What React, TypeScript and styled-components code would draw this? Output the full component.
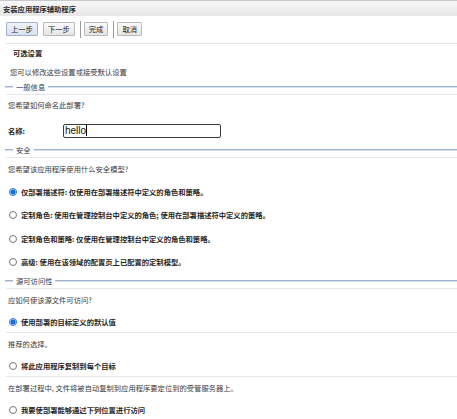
import React from 'react'
import styled, { createGlobalStyle } from 'styled-components'

const GlobalStyle = createGlobalStyle`
  html, body {
    margin: 0;
    padding: 0;
    background: #ffffff;
  }
  body {
    font-family: "Noto Sans CJK SC", "Noto Sans", "Liberation Sans", sans-serif;
    font-size: 7.3px;
    color: #333333;
  }
  * { box-sizing: border-box; }
`

interface RowProps {
  h: number
  pl?: number
  line?: boolean
}

interface RadioProps {
  checked?: boolean
}

const securityOptions = [
  '仅部署描述符: 仅使用在部署描述符中定义的角色和策略。',
  '定制角色: 使用在管理控制台中定义的角色; 使用在部署描述符中定义的策略。',
  '定制角色和策略: 仅使用在管理控制台中定义的角色和策略。',
  '高级: 使用在该领域的配置页上已配置的定制模型。',
]

const Section = ({ title }: { title: string }) => (
  <SectionHeader>
    <Dash />
    <Legend>{title}</Legend>
    <Rule />
  </SectionHeader>
)

const Option = ({ label, checked, line }: { label: string; checked?: boolean; line?: boolean }) => (
  <Row h={22} pl={3} line={line}>
    <Radio checked={checked} />
    <OptionLabel>{label}</OptionLabel>
  </Row>
)

const App = () => {
  return (
    <>
      <GlobalStyle />
      <Page>
        <TitleBar>安装应用程序辅助程序</TitleBar>
        <Toolbar>
          <Button primary>上一步</Button>
          <Button>下一步</Button>
          <Separator />
          <Button>完成</Button>
          <Separator />
          <Button>取消</Button>
        </Toolbar>
        <Content>
          <Row h={17} pl={7}>
            <Strong>可选设置</Strong>
          </Row>
          <Row h={22} pl={4}>您可以修改这些设置或接受默认设置</Row>

          <Section title="一般信息" />
          <Row h={20} pl={2}>您希望如何命名此部署?</Row>
          <Row h={31} pl={2}>
            <FieldLabel>名称:</FieldLabel>
            <Field>
              hello<Caret />
            </Field>
          </Row>

          <Section title="安全" />
          <Row h={22} pl={2}>您希望该应用程序使用什么安全模型?</Row>
          <RadioGroup>
            {securityOptions.map((o, i) => (
              <RadioRow key={i}>
                <Radio checked={i === 0} />
                <OptionLabel>{o}</OptionLabel>
              </RadioRow>
            ))}
          </RadioGroup>

          <Section title="源可访问性" />
          <Row h={22} pl={2}>应如何使该源文件可访问?</Row>
          <Option label="使用部署的目标定义的默认值" checked line />
          <Row h={22} pl={2}>推荐的选择。</Row>
          <Option label="将此应用程序复制到每个目标" line />
          <Row h={22} pl={2}>在部署过程中, 文件将被自动复制到应用程序要定位到的受管服务器上。</Row>
          <Option label="我要使部署能够通过下列位置进行访问" />
        </Content>
      </Page>
    </>
  )
}

export default App

const Page = styled.div`
  width: 457px;
  height: 419px;
  overflow: hidden;
  background: #fff;
`

const TitleBar = styled.div`
  height: 16px;
  display: flex;
  align-items: center;
  padding-left: 3px;
  border-top: 1px solid #c6c9cc;
  background: linear-gradient(#f7f7f7, #e6e7e6);
  font-weight: bold;
  color: #2a2a2a;
`

const Toolbar = styled.div`
  height: 28px;
  margin-left: 6px;
  display: flex;
  align-items: center;
  border-bottom: 1px solid #e4e4e4;
  padding-bottom: 1px;
`

const Button = styled.div<{ primary?: boolean }>`
  height: 14px;
  padding: 0 4px;
  margin-right: 5px;
  display: flex;
  align-items: center;
  border: 1px solid ${p => (p.primary ? '#a3b3cb' : '#b9b9b9')};
  border-radius: 1px;
  background: ${p =>
    p.primary ? 'linear-gradient(#eef3fa, #d7e1ef)' : 'linear-gradient(#fbfbfb, #e5e5e5)'};
  color: #222;
`

const Separator = styled.div`
  width: 1px;
  height: 17px;
  background: #9a9a9a;
  margin: 0 3px 0 0;
`

const Content = styled.div`
  padding-left: 6px;
`

const Row = styled.div<RowProps>`
  height: ${p => p.h}px;
  padding-left: ${p => p.pl ?? 0}px;
  display: flex;
  align-items: center;
  white-space: nowrap;
  color: #3a3a3a;
  ${p => (p.line ? 'border-bottom: 1px solid #e6e6e6;' : '')}
`

const Strong = styled.span`
  font-weight: bold;
  color: #222;
`

const SectionHeader = styled.div`
  height: 12px;
  padding-bottom: 3px;
  display: flex;
  align-items: center;
  border-bottom: 1px solid #e8e8e8;
`

const Dash = styled.div`
  width: 8px;
  height: 2px;
  margin-left: -1px;
  background: linear-gradient(#9fb2ce 50%, #d6dfec 50%);
`

const Legend = styled.span`
  padding: 0 3px;
  color: #2e3a52;
`

const Rule = styled.div`
  flex: 1;
  height: 2px;
  background: linear-gradient(#9fb2ce 50%, #d6dfec 50%);
`

const FieldLabel = styled.span`
  width: 55px;
  font-weight: bold;
  color: #222;
`

const Field = styled.div`
  width: 158px;
  height: 14px;
  border: 1px solid #3c3c3c;
  border-radius: 2px;
  display: flex;
  align-items: center;
  padding-left: 1px;
  font-family: "Liberation Sans", Arial, sans-serif;
  font-size: 10px;
  color: #111;
`

const Caret = styled.span`
  width: 1px;
  height: 11px;
  background: #000;
`

const RadioGroup = styled.div`
  padding-bottom: 3px;
`

const RadioRow = styled.div`
  height: 23.5px;
  padding-left: 3px;
  display: flex;
  align-items: center;
  white-space: nowrap;
`

const Radio = styled.span<RadioProps>`
  width: 8px;
  height: 8px;
  border-radius: 50%;
  flex: none;
  border: 1px solid ${p => (p.checked ? '#1a6fe0' : '#777')};
  background: ${p =>
    p.checked ? 'radial-gradient(circle, #1a6fe0 0 2.3px, #ffffff 2.8px)' : '#fff'};
`

const OptionLabel = styled.span`
  margin-left: 4px;
  font-weight: 600;
  color: #262626;
`
